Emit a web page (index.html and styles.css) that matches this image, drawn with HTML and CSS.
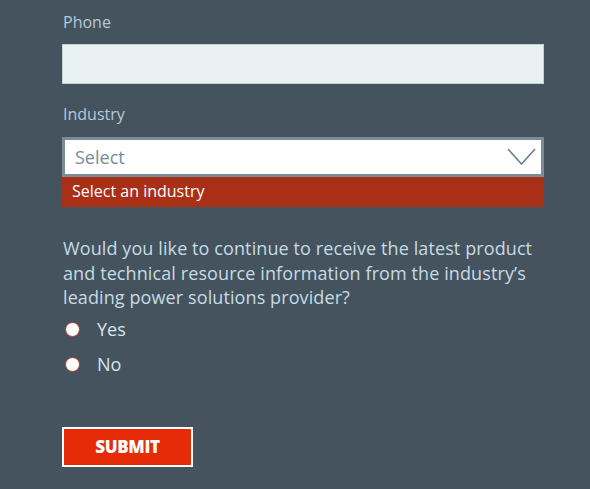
FILE: index.html
```html
<!DOCTYPE html>
<html>
<head>
<meta charset="utf-8">
<link rel="stylesheet" href="styles.css">
</head>
<body>
<form class="form">
  <label class="label">Phone</label>
  <div class="input"></div>
  <label class="label label-industry">Industry</label>
  <div class="select">
    <span class="select-text">Select</span>
    <svg class="chevron" width="30" height="20" viewBox="0 0 30 20"><path d="M1 2 L14.5 17 L28 2" fill="none" stroke="#6e808c" stroke-width="1.6"/></svg>
  </div>
  <div class="error">Select an industry</div>
  <p class="question">Would you like to continue to receive the latest product and technical resource information from the industry’s leading power solutions provider?</p>
  <div class="radios">
    <div class="radio-row"><span class="radio"></span><span class="radio-label">Yes</span></div>
    <div class="radio-row"><span class="radio"></span><span class="radio-label">No</span></div>
  </div>
  <button class="submit" type="button">SUBMIT</button>
</form>
</body>
</html>
```
FILE: styles.css
```css
html, body {
  margin: 0;
  padding: 0;
  background: #45535f;
  height: 100%;
  overflow: hidden;
}
.form {
  display: flex;
  flex-direction: column;
  width: 482px;
  margin-left: 62px;
  font-family: "Open Sans", "Noto Sans", sans-serif;
}
.label {
  color: #b3cbd6;
  font-size: 16px;
  line-height: 20px;
  margin-top: 12px;
  padding-left: 1px;
}
.label-industry {
  margin-top: 20px;
}
.input {
  margin-top: 12px;
  height: 38px;
  background: #eaf2f1;
  border: 1px solid #c3d2d3;
}
.select {
  margin-top: 13px;
  height: 34px;
  background: #fff;
  border: 3px solid #7b8c97;
  display: flex;
  align-items: center;
  justify-content: space-between;
  padding: 0 4px 0 10px;
}
.select-text {
  color: #7a8b97;
  font-size: 18px;
}
.chevron {
  display: block;
}
.error {
  height: 30px;
  background: #a93016;
  color: #fff;
  font-size: 16px;
  line-height: 28px;
  padding-left: 10px;
}
.question {
  margin: 29px 0 0 1px;
  color: #c5dbe3;
  font-size: 18px;
  letter-spacing: 0.1px;
  line-height: 24.5px;
}
.radios {
  display: flex;
  flex-direction: column;
  gap: 10px;
  margin-top: 7px;
}
.radio-row {
  display: flex;
  align-items: center;
  height: 25px;
}
.radio {
  width: 13px;
  height: 13px;
  border-radius: 50%;
  background: #fff;
  border: 1px solid #b5381c;
  margin-left: 3px;
}
.radio-label {
  margin-left: 17px;
  color: #d6e6ec;
  font-size: 18px;
}
.submit {
  margin-top: 50px;
  width: 131px;
  height: 40px;
  background: #e52b08;
  border: 2px solid #fff;
  color: #fff;
  font-family: "Open Sans", "Noto Sans", sans-serif;
  font-weight: 800;
  font-size: 17px;
  letter-spacing: -0.3px;
  padding: 0;
  cursor: pointer;
}
```
